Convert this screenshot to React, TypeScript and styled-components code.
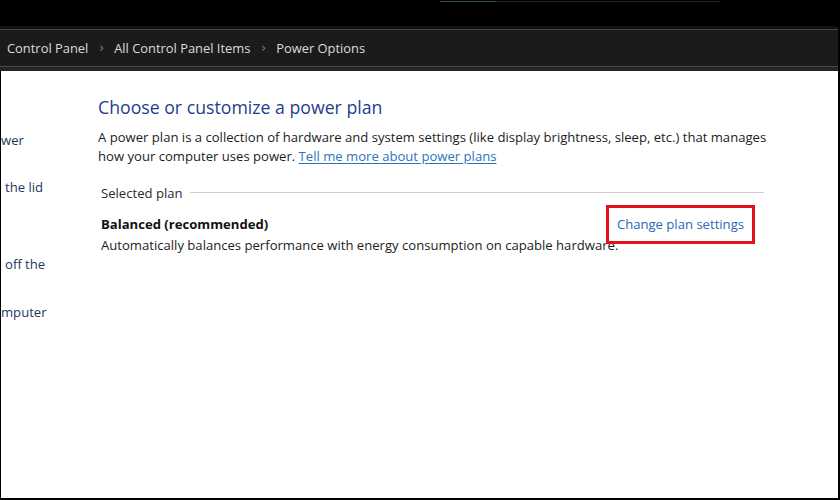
import React from "react";
import styled, { createGlobalStyle } from "styled-components";

const Global = createGlobalStyle`
  html, body { margin: 0; padding: 0; background: #000; }
  body { font-family: "Open Sans", "Noto Sans", "Liberation Sans", sans-serif; }
`;

const Window = styled.div`
  width: 840px;
  height: 500px;
  background: #000;
  display: flex;
  flex-direction: column;
  overflow: hidden;
`;

const TopStrip = styled.div`
  height: 26px;
  padding-top: 1px;
  padding-left: 440px;
  box-sizing: border-box;
  display: flex;
  align-items: flex-start;
`;

const Progress = styled.div`
  width: 280px;
  height: 1px;
  background: #242424;
  display: flex;
`;

const ProgressFill = styled.div`
  height: 1px;
  background: #2f4d4b;
`;

const AddressBar = styled.div`
  height: 45px;
  background: #1b1b1b;
  border-top: 3px solid #121212;
  box-shadow: inset 0 1px 0 #464646;
  display: flex;
  flex-direction: column;
  box-sizing: border-box;
  margin-right: 2px;
`;

const Crumbs = styled.div`
  height: 36px;
  display: flex;
  align-items: center;
  padding-left: 7px;
  padding-top: 1px;
  color: #dcdcdc;
  font-size: 12.9px;
  border-bottom: 1px solid #474747;
`;

const Crumb = styled.span`
  white-space: nowrap;
`;

const Chevron = styled.span`
  color: #8a8a8a;
  font-size: 12px;
  margin: 0 10px 0 11px;
  font-family: "DejaVu Sans", sans-serif;
`;

const BarFoot = styled.div`
  flex: 1;
  background: #242424;
`;

const Body = styled.div`
  flex: 1;
  background: #fff;
  margin: 0 2px 2px 1px;
  display: grid;
  grid-template-columns: 97px 672px;
  color: #1c1c1c;
  font-size: 13.1px;
`;

const Sidebar = styled.div`
  display: flex;
  flex-direction: column;
  padding-top: 60px;
  overflow: hidden;
`;

const SideLink = styled.div<{ $indent: number; $gap: number }>`
  color: #22395e;
  line-height: 19px;
  white-space: nowrap;
  padding-left: ${(p) => p.$indent}px;
  margin-top: ${(p) => p.$gap}px;
`;

const Main = styled.div`
  padding-top: 24px;
  display: flex;
  flex-direction: column;
`;

const Heading = styled.h1`
  margin: 0;
  font-weight: 400;
  font-size: 17.7px;
  line-height: 24px;
  color: #1f3d8e;
`;

const Para = styled.p`
  margin: 9px 0 0 0;
  line-height: 19px;
  white-space: nowrap;
`;

const Link = styled.a`
  color: #2f72bd;
  text-decoration: underline;
  text-underline-offset: 2px;
`;

const Group = styled.div`
  margin: 18px 6px 0 3px;
  display: flex;
  flex-direction: column;
`;

const GroupHeader = styled.div`
  display: flex;
  align-items: center;
  line-height: 19px;
  gap: 7px;
  color: #2a2a2a;
  &::after {
    content: "";
    flex: 1;
    height: 1px;
    background: #cfcfcf;
    margin-top: -3px;
  }
`;

const PlanRow = styled.div`
  margin-top: 12px;
  display: flex;
  justify-content: space-between;
  align-items: center;
  height: 19px;
`;

const PlanName = styled.span`
  font-weight: 700;
  line-height: 19px;
  color: #111;
`;

const Highlight = styled.div`
  border: 3px solid #e3111b;
  padding: 7px 8px 7px 8px;
  margin: -10px 9px -10px 0;
  line-height: 19px;
  position: relative;
`;

const PlanLink = styled.span`
  color: #2b68b5;
`;

const PlanDesc = styled.div`
  margin-top: 2px;
  line-height: 19px;
  white-space: nowrap;
`;

export default function App() {
  return (
    <>
      <Global />
      <Window>
        <TopStrip>
          <Progress>
            <ProgressFill style={{ width: "56px" }} />
          </Progress>
        </TopStrip>
        <AddressBar>
          <Crumbs>
            <Crumb>Control Panel</Crumb>
            <Chevron>›</Chevron>
            <Crumb>All Control Panel Items</Crumb>
            <Chevron>›</Chevron>
            <Crumb>Power Options</Crumb>
          </Crumbs>
          <BarFoot />
        </AddressBar>
        <Body>
          <Sidebar>
            <SideLink $indent={0} $gap={0}>wer</SideLink>
            <SideLink $indent={4} $gap={28}>the lid</SideLink>
            <SideLink $indent={4} $gap={58}>off the</SideLink>
            <SideLink $indent={0} $gap={29}>mputer</SideLink>
          </Sidebar>
          <Main>
            <Heading>Choose or customize a power plan</Heading>
            <Para>
              A power plan is a collection of hardware and system settings (like display brightness, sleep, etc.) that manages
              <br />
              how your computer uses power. <Link>Tell me more about power plans</Link>
            </Para>
            <Group>
              <GroupHeader>Selected plan</GroupHeader>
              <PlanRow>
                <PlanName>Balanced (recommended)</PlanName>
                <Highlight>
                  <PlanLink>Change plan settings</PlanLink>
                </Highlight>
              </PlanRow>
              <PlanDesc>Automatically balances performance with energy consumption on capable hardware.</PlanDesc>
            </Group>
          </Main>
        </Body>
      </Window>
    </>
  );
}
